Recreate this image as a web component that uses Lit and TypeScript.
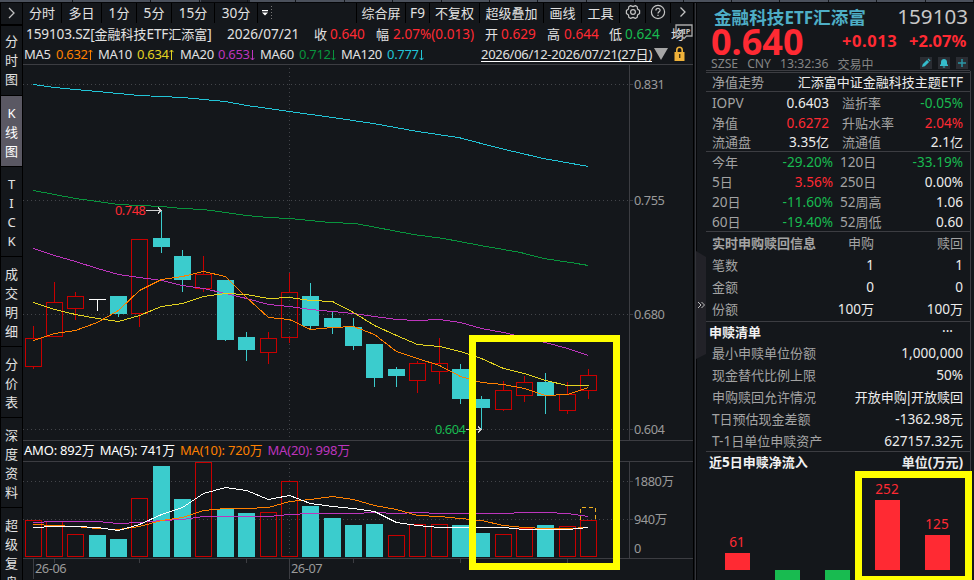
import { LitElement, html, svg, css } from 'lit';
import { customElement } from 'lit/decorators.js';

const RED = '#ff2a33';
const GREEN = '#18bb50';
const CYAN = '#3bcccd';

// Chinese glyphs are set a little smaller than the latin text beside them
const mix = (text: string) =>
  text.split(/([\u4e00-\u9fff]+|\|)/).filter(Boolean).map((part) => {
    if (part === '|') return html`<span class="bar">|</span>`;
    return /[\u4e00-\u9fff]/.test(part) ? html`<span class="cjk">${part}</span>` : part;
  });

const px = (i: number) => Math.floor(33 + i * 21.37);

// type, high, body top, body bottom, low, volume top
type Candle = [string, number, number, number, number, number];
const candles: Candle[] = [
  ['u', 326, 338, 367, 369, 520],
  ['u', 282, 302, 337, 337, 521],
  ['u', 292, 296, 309, 320, 534],
  ['t', 299, 299, 300, 311, 535],
  ['d', 296, 296, 314, 317, 539],
  ['u', 239, 239, 314, 327, 498],
  ['d', 210, 238, 247, 253, 466],
  ['d', 250, 256, 280, 292, 499],
  ['u', 256, 274, 289, 292, 462],
  ['d', 280, 280, 340, 341, 509],
  ['d', 332, 337, 350, 361, 513],
  ['u', 332, 338, 353, 364, 512],
  ['u', 273, 292, 338, 343, 481],
  ['d', 283, 296, 326, 329, 506],
  ['d', 312, 318, 327, 334, 518],
  ['d', 318, 327, 346, 350, 525],
  ['d', 344, 344, 378, 387, 524],
  ['d', 367, 369, 376, 387, 535],
  ['u', 361, 363, 381, 393, 524],
  ['u', 338, 363, 372, 384, 524],
  ['d', 364, 369, 399, 404, 525],
  ['d', 396, 399, 408, 430, 533],
  ['u', 381, 390, 410, 411, 534],
  ['u', 376, 382, 396, 402, 528],
  ['d', 373, 382, 396, 414, 525],
  ['u', 382, 394, 411, 414, 526],
  ['u', 369, 375, 391, 399, 520],
];
// bars 17 and 18 swap styles only in the volume pane
const isUp = (c: Candle, i: number) => (i === 17 ? true : i === 18 ? true : c[0] === 'u');

const ma5 = [340, 333, 330, 322, 310, 290, 279, 276, 271, 276, 297, 317, 319, 329, 327, 326, 334, 351, 358, 365, 376, 382, 384, 388, 395, 394, 387];
const ma10 = [302, 309, 314, 318, 321, 315, 306, 303, 296, 293, 294, 298, 297, 300, 301, 312, 325, 335, 344, 346, 351, 358, 368, 373, 380, 385, 385];
const ma20 = [248, 255, 261, 268, 274, 277, 280, 285, 288, 293, 298, 304, 306, 309, 311, 313, 316, 319, 320, 319, 322, 328, 332, 337, 342, 348, 355];
const ma60 = [[33, 190], [54, 194], [75, 198], [97, 201], [118, 204], [139, 205], [161, 206], [182, 208], [203, 209], [225, 212], [246, 215], [268, 217], [289, 218], [330, 222], [355, 223], [413, 234], [443, 238], [480, 245], [520, 252], [543, 258], [570, 262], [588, 265]];
const ma120 = [[33, 84], [54, 87], [75, 89], [97, 91], [118, 93], [139, 95], [182, 97], [225, 101], [246, 105], [268, 108], [289, 111], [332, 117], [373, 123], [417, 131], [458, 137], [500, 148], [543, 158], [588, 166]];

const vol5 = [527, 526, 526, 527, 530, 524, 514, 507, 493, 487, 490, 499, 495, 503, 506, 508, 511, 522, 525, 527, 527, 527, 527, 529, 529, 529, 527];
const vol10 = [524, 525, 526, 528, 529, 526, 520, 517, 510, 508, 508, 507, 501, 499, 496, 499, 505, 509, 515, 516, 518, 520, 525, 527, 528, 528, 527];
const vol20 = [522, 521, 521, 521, 523, 522, 520, 519, 516, 516, 516, 516, 514, 513, 513, 513, 512, 513, 512, 513, 513, 513, 513, 512, 512, 513, 516];

const path = (pts: number[][], color: string) =>
  svg`<polyline class="line" stroke=${color} points=${pts.map(([x, y]) => `${x + 0.5},${y + 0.5}`).join(' ')}></polyline>`;
const series = (ys: number[], color: string) => path(ys.map((y, i) => [px(i), y]), color);

const candle = ([kind, high, top, bottom, low]: Candle, i: number) => {
  const x = px(i);
  if (kind === 't') {
    return svg`<path class="line" stroke="#fff" d="M${x - 8} ${top}.5h17M${x + 0.5} ${top}V${low}"></path>`;
  }
  if (kind === 'u') {
    return svg`<path class="line" stroke="#c80000" d="M${x + 0.5} ${high}V${top}M${x + 0.5} ${bottom}V${low}"></path>
      <rect class="line" stroke="#c80000" x=${x - 7.5} y=${top + 0.5} width="16" height=${bottom - top - 1}></rect>`;
  }
  return svg`<rect fill=${CYAN} x=${x} y=${high} width="1" height=${low - high}></rect>
    <rect fill=${CYAN} x=${x - 8} y=${top} width="17" height=${bottom - top}></rect>`;
};

const volume = (c: Candle, i: number) =>
  isUp(c, i)
    ? svg`<rect class="line" stroke="#c80000" x=${px(i) - 7.5} y=${c[5] + 0.5} width="16" height=${556 - c[5]}></rect>`
    : svg`<rect fill=${CYAN} x=${px(i) - 8} y=${c[5]} width="17" height=${557 - c[5]}></rect>`;

const up = svg`<path d="M2.5 1v10M0.5 3.2L2.5 1L4.5 3.2"></path>`;
const down = svg`<path d="M2.5 1v10M0.5 8.8L2.5 11L4.5 8.8"></path>`;

@customElement('app-root')
export class AppRoot extends LitElement {
  static styles = css`
    :host {
      display: block;
      width: 974px;
      height: 580px;
      overflow: hidden;
      position: relative;
      background: #14171b;
      color: #e2e2e2;
      font-family: 'Noto Sans', 'Noto Sans CJK SC', sans-serif;
      font-size: 13.6px;
      line-height: 20px;
    }
    * {
      box-sizing: border-box;
    }
    .cjk {
      font-family: 'Noto Sans CJK SC', sans-serif;
      font-size: 13px;
      letter-spacing: 0;
    }
    .bar {
      margin: 0 -1.6px;
    }
    .strip {
      height: 3px;
      border-bottom: 1px solid #050608;
      background: linear-gradient(90deg, #4b515c 0 201px, #23262d 201px 250px, #4b515c 250px);
      display: flex;
    }
    .strip i {
      width: 49px;
      border-right: 1px solid #14171b;
    }
    .strip i:first-child {
      width: 74px;
    }
    .strip i:nth-child(2) {
      width: 79px;
    }
    .page {
      display: flex;
      height: 577px;
    }
    .rail {
      width: 23px;
      border-left: 1px solid #000;
      border-right: 1px solid #000;
      overflow: hidden;
      flex: none;
    }
    .rail div {
      border-bottom: 1px solid #000;
      padding-top: 8px;
      text-align: center;
      font-size: 13px;
      line-height: 19px;
    }
    .rail span {
      display: block;
    }
    .rail .open {
      height: 23px;
      padding: 3px 0 0;
      border-bottom: 2px solid #000;
      line-height: 0;
    }
    .rail .h3 {
      height: 71px;
    }
    .rail .first {
      height: 70px;
      padding-top: 6px;
    }
    .rail .h4 {
      height: 90px;
    }
    .rail .active {
      background: #5a5863;
      color: #fff;
    }
    .main {
      width: 670px;
      flex: none;
    }
    .toolbar {
      display: flex;
      height: 20px;
    }
    .toolbar div {
      border-right: 1px solid #000;
      text-align: center;
      white-space: nowrap;
      flex: none;
      line-height: 20px;
    }
    .toolbar .gap {
      display: flex;
      align-items: center;
      padding-left: 4px;
    }
    .toolbar svg {
      display: block;
      margin: 1px auto 0;
    }
    .toolbar .gap svg {
      margin: 0;
    }
    .quote,
    .averages {
      display: grid;
      white-space: nowrap;
      position: relative;
    }
    .quote {
      grid-template-columns: 201px 87px 16px 46px 17px 92px 16px 46px 17px 45px 16px 46px 20px;
      padding: 0 0 0 3px;
      height: 22px;
    }
    .quote > * {
      line-height: 21px;
    }
    .quote .name {
      letter-spacing: -0.15px;
    }
    .averages {
      grid-template-columns: 32px 42px 39px 43px 38px 42px 39px 42px 46px 94px 173px 20px 14px;
      padding-left: 1px;
      height: 19px;
      font-size: 13px;
      letter-spacing: -0.3px;
      line-height: 19px;
    }
    .averages > :nth-child(n + 11) {
      align-self: start;
    }
    .averages .range {
      justify-self: start;
      line-height: 17px;
      height: 17px;
      border-bottom: 1px solid #fff;
      letter-spacing: -0.28px;
    }
    .arrow {
      fill: none;
      stroke: currentColor;
      vertical-align: -2px;
    }
    .vip {
      position: absolute;
      left: 652px;
      top: 1px;
    }
    .legend {
      display: flex;
      gap: 5px;
      padding-left: 1px;
      height: 20px;
      line-height: 18px;
      font-size: 13px;
      letter-spacing: -0.2px;
      color: #fff;
      white-space: nowrap;
    }
    .legend .cjk {
      font-size: 12.8px;
    }
    svg {
      display: block;
    }
    svg.arrow {
      display: inline-block;
    }
    .line {
      fill: none;
      stroke-width: 1;
      shape-rendering: crispEdges;
    }
    .frame {
      stroke: #3c3d42;
    }
    .dots {
      stroke: #43454a;
      stroke-dasharray: 1 3;
    }
    .axis {
      fill: #9a9a9a;
      font-size: 12.8px;
      letter-spacing: -0.45px;
    }
    .split {
      width: 13px;
      flex: none;
      border-left: 1px solid #000;
    }
    .side {
      width: 264px;
      flex: none;
      color: #a3a3a3;
    }
    .scroll {
      width: 2px;
      margin-top: 68px;
      border-left: 1px solid #3c3d42;
    }
    .title,
    .price,
    .status,
    .row {
      display: flex;
      white-space: nowrap;
    }
    .title {
      justify-content: space-between;
      height: 25px;
      padding: 0 2px 0 8px;
      line-height: 27px;
      color: #4eaec6;
      font-weight: bold;
      font-size: 17px;
    }
    .title .cjk {
      font-size: 17.6px;
    }
    .title .code {
      color: #c8c8c8;
      font-weight: normal;
      font-size: 20.6px;
      line-height: 26px;
    }
    .price {
      height: 29px;
      padding-left: 5px;
      color: #ff2a33;
      font-weight: bold;
      font-size: 16.5px;
      line-height: 26px;
    }
    .price .last {
      font-size: 36px;
      line-height: 28px;
      width: 131px;
    }
    .price .diff {
      width: 67px;
      letter-spacing: 0.55px;
    }
    .status {
      height: 13px;
      padding-left: 5px;
      font-size: 12.2px;
      line-height: 14px;
      color: #858585;
    }
    .status > span {
      margin-right: 9px;
    }
    .status .cjk {
      font-size: 12px;
    }
    .status svg {
      margin-right: 6px;
    }
    .status .push {
      flex: 1;
    }
    .block {
      border-top: 1px solid #3c3d42;
      padding: 0 7px 0 6px;
    }
    .row > * {
      width: 117px;
    }
    .block.top {
      height: 21px;
      border-top: 3px double #3c3d42;
      line-height: 17px;
    }
    .top .row > :first-child {
      width: 60px;
    }
    .top .row > :last-child {
      flex: 1;
    }
    .four .row > :nth-child(3) {
      padding-left: 13px;
      width: 80px;
    }
    .four .row > :last-child {
      flex: 1;
    }
    .nav {
      padding-top: 1px;
      line-height: 19.5px;
    }
    .years .row > :nth-child(3) {
      padding-left: 7px;
      width: 70px;
    }
    .three .row,
    .list .row {
      height: 22px;
      line-height: 21px;
    }
    .list .row {
      line-height: 19px;
    }
    .list .row:first-child {
      height: 21px;
    }
    .three .row > :nth-child(2) {
      width: 45px;
    }
    .three .row > :last-child {
      flex: 1;
    }
    .list .row > :last-child {
      flex: 1;
    }
    .list .row > :first-child {
      width: 130px;
    }
    .v {
      text-align: right;
      color: #ececec;
    }
    .g {
      color: #18bb50;
    }
    .r {
      color: #ff2a33;
    }
    .dim {
      color: #a3a3a3;
    }
    .head {
      font-weight: bold;
    }
    .lit {
      color: #f2f2f2;
      margin-left: -3px;
    }
    .mark {
      position: absolute;
      border: 7px solid #ffff00;
    }
    .mark.candles {
      left: 469px;
      top: 335px;
      width: 151px;
      height: 235px;
    }
    .mark.flow {
      left: 855px;
      top: 471px;
      width: 117px;
      height: 112px;
    }
  `;

  rail() {
    const items: [string, string][] = [
      ['分时图', 'first'], ['K线图', 'h3 active'], ['TICK', 'h4'], ['成交明细', 'h4'],
      ['分价表', 'h3'], ['深度资料', 'h4'], ['超级复盘', 'h4'],
    ];
    return html`
      <div class="rail">
        <div class="open">
          <svg width="20" height="14" fill="none" stroke="#c0c0c0" stroke-width="1.3"><path d="M8 2L13 7L8 12"></path></svg>
        </div>
        ${items.map(([text, cls]) => html`<div class=${cls}>${[...text].map((c) => html`<span>${c}</span>`)}</div>`)}
      </div>
    `;
  }

  toolbar() {
    const left: [string, number][] = [['分时', 39], ['多日', 40], ['1分', 35], ['5分', 35], ['15分', 43], ['30分', 43]];
    const right: [string, number][] = [['综合屏', 49], ['F9', 24], ['不复权', 50], ['超级叠加', 64], ['画线', 38], ['工具', 38]];
    return html`
      <div class="toolbar">
        ${left.map(([t, w]) => html`<div style="width:${w}px">${mix(t)}</div>`)}
        <div class="gap" style="width:99px">
          <svg width="12" height="14"><path fill="#fff" d="M0 4h6v1.3H0zM0 6.5h6L3 9.5z"></path><path stroke="#777" stroke-dasharray="1 2" d="M9.5 0v14"></path></svg>
        </div>
        ${right.map(([t, w]) => html`<div style="width:${w}px">${mix(t)}</div>`)}
        <div style="width:26px">
          <svg width="16" height="16" fill="none" stroke="#c4c4c4" stroke-width="1.2">
            <path stroke-linejoin="round" d="M5.6 1.6L8 2.6L10.4 1.6L12.2 2.7L12.5 5L14.6 6.6V9.4L12.5 11L12.2 13.3L10.4 14.4L8 13.4L5.6 14.4L3.8 13.3L3.5 11L1.4 9.4V6.6L3.5 5L3.8 2.7z"></path>
            <circle cx="8" cy="8" r="2.4"></circle>
          </svg>
        </div>
        <div style="width:25px">
          <svg width="16" height="16" fill="none" stroke="#c4c4c4" stroke-width="1.2">
            <circle cx="8" cy="8" r="6.6"></circle>
            <path d="M5.9 6.4C5.9 3.7 10.1 3.7 10.1 6.3C10.1 7.8 8 7.9 8 9.5M8 10.7v1.3"></path>
          </svg>
        </div>
        <div style="width:24px;border:0">
          <svg width="16" height="16" fill="none" stroke="#c4c4c4" stroke-width="1.3"><path d="M5.5 3.5L10 8L5.500 12.5"></path></svg>
        </div>
      </div>
    `;
  }

  header() {
    const ma: [string, string, string, unknown][] = [
      ['MA5', '0.632', '#ff8000', up], ['MA10', '0.634', '#e3d321', up], ['MA20', '0.653', '#bd35bd', down],
      ['MA60', '0.712', '#08943d', down], ['MA120', '0.777', '#22c4d6', down],
    ];
    return html`
      <div class="quote">
        <span class="name">${mix('159103.SZ[金融科技ETF汇添富]')}</span><span>2026/07/21</span>
        <span>${mix('收')}</span><span class="r">0.640</span>
        <span>${mix('幅')}</span><span class="r">2.07%(0.013)</span>
        <span>${mix('开')}</span><span class="r">0.629</span>
        <span>${mix('高')}</span><span class="r">0.644</span>
        <span>${mix('低')}</span><span class="g">0.624</span>
        <span>${mix('均')}</span>
        <svg class="vip" width="18" height="16">
          <path fill="none" stroke="#a9a9a9" stroke-width="1.3" d="M1 1h16v11h-5.5l-2.5 2.5l-2.5-2.5H1z"></path>
          <text x="3" y="9.5" font-size="7.5" font-weight="bold" fill="#c4c4c4">VIP</text>
        </svg>
      </div>
      <div class="averages">
        ${ma.map(([name, value, color, arrow]) => html`
          <span>${name}</span><span style="color:${color}">${value}<svg class="arrow" width="5" height="12">${arrow}</svg></span>`)}
        <span class="range">${mix('2026/06/12-2026/07/21(27日)')}</span>
        <svg width="15" height="16"><path fill="#a6a6a6" d="M0 3h14L7 15z"></path></svg>
        <svg width="12" height="16">
          <path fill="none" stroke="#efb23a" stroke-width="1.6" d="M2.8 8V5C2.8 1.4 8.2 1.4 8.2 5V8"></path>
          <path fill="#efb23a" d="M0.5 7h10v9h-10z"></path>
          <path fill="#4a3410" d="M5 9h1.4v4H5z"></path>
        </svg>
      </div>
    `;
  }

  priceChart() {
    const grid: [number, string][] = [[84, '0.831'], [200, '0.755'], [314, '0.680'], [429, '0.604']];
    return html`
      <svg width="670" height="377" viewBox="23 64 670 377">
        <path class="line frame" d="M23 64.5H693M23 440.5H693M629.5 65V440"></path>
        <path class="line dots" d="M289.5 68V440"></path>
        ${grid.map(([y, label]) => svg`
          <path class="line dots" d="M23 ${y}.5H629"></path>
          <path class="line frame" d="M629 ${y}.5h4"></path>
          <text class="axis" x="634" y=${y + 5}>${label}</text>`)}
        ${candles.map(candle)}
        ${path(ma120, '#22c4d6')}
        ${path(ma60, '#08943d')}
        ${series(ma20, '#bd35bd')}
        ${series(ma10, '#e3d321')}
        ${series(ma5, '#ff8000')}
        <text class="axis" x="115" y="215" style="fill:${RED}">0.748</text>
        <path class="line" stroke="#d0d0d0" d="M146 210.5h15M158 207.5l3 3l-3 3"></path>
        <text class="axis" x="435" y="434" style="fill:${GREEN}">0.604</text>
        <path class="line" stroke="#d0d0d0" d="M466 429.5h15M478 426.5l3 3l-3 3"></path>
      </svg>
    `;
  }

  volumeChart() {
    return html`
      <div class="legend">
        <span>${mix('AMO: 892万')}</span>
        <span>${mix('MA(5): 741万')}</span>
        <span style="color:#ff8000">${mix('MA(10): 720万')}</span>
        <span style="color:#bd35bd">${mix('MA(20): 998万')}</span>
      </div>
      <svg width="670" height="119" viewBox="23 461 670 119">
        <path class="line frame" d="M23 461.5H693M23 558.5H693M629.5 462V558M629 481.5h4M629 519.5h4M33.5 559v20M289.5 559v20"></path>
        <path class="line frame" d=${[54, 139, 246, 353, 460, 567].map((x) => `M${x}.5 559v4`).join('')}></path>
        <path class="line dots" d="M23 481.5H629M23 519.5H629M289.5 464V558"></path>
        ${candles.map(volume)}
        <path class="line" stroke="#f0b020" stroke-dasharray="4 3" d="M580.5 520V507.5H595.5V520"></path>
        ${series(vol20, '#bd35bd')}
        ${series(vol10, '#ff8000')}
        ${series(vol5, '#fff')}
        <text class="axis" x="634" y="486">1880<tspan font-size="12.500">万</tspan></text>
        <text class="axis" x="634" y="524">940<tspan font-size="12.500">万</tspan></text>
        <text class="axis" x="634" y="553">0</text>
        <text class="axis" x="35" y="573">26-06</text>
        <text class="axis" x="291" y="573">26-07</text>
      </svg>
    `;
  }

  // label, value, label, value; `split` is the right edge of the first value
  four(rows: string[][], split: number) {
    const tone = (s: string) => (s[0] === '-' ? 'v g' : /^(0\.6272|2\.04%|3\.56%)$/.test(s) ? 'v r' : 'v');
    return rows.map(([a, b, c, d]) => html`
      <div class="row">
        <span style="width:50px">${mix(a)}</span>
        <span class=${tone(b)} style="width:${split - 50}px">${mix(b)}</span>
        <span>${mix(c)}</span><span class=${tone(d)}>${mix(d)}</span>
      </div>`);
  }

  side() {
    const flows = [[725, 553, 570, '61'], [775, 570, 590, ''], [825, 570, 590, ''], [875, 500, 570, '252'], [925, 535, 570, '125']] as const;
    const list = [
      ['最小申赎单位份额', '1,000,000'], ['现金替代比例上限', '50%'], ['申购赎回允许情况', '开放申购|开放赎回'],
      ['T日预估现金差额', '-1362.98元'], ['T-1日单位申赎资产', '627157.32元'],
    ];
    return html`
      <div class="side">
        <div class="title"><span>${mix('金融科技ETF汇添富')}</span><span class="code">159103</span></div>
        <div class="price"><span class="last">0.640</span><span class="diff">+0.013</span><span>+2.07%</span></div>
        <div class="status">
          <span>SZSE</span><span>CNY</span><span>13:32:36</span><span>${mix('交易中')}</span><span class="push"></span>
          <svg width="12" height="12"><path fill="#2a2d33" d="M0 0h12v12H0z"></path><path fill="#35bccb" d="M2 10l.7-2.8L7 2.9L9.1 5L4.8 9.3zM7.6 2.3l.8-.8l2.1 2.1l-.8.8z"></path></svg>
          <svg width="12" height="12"><path fill="#2a2d33" d="M0 0h12v12H0z"></path><path fill="#35bccb" d="M2 9V8l1-1V5C3 1 9 1 9 5v2l1 1v1zM4.8 9.6h2.4v.9H4.8z"></path></svg>
          <svg width="12" height="12" style="margin-right:2px"><path fill="#2a2d33" d="M0 0h12v12H0z"></path><path stroke="#2b96a6" stroke-width="1.5" d="M6 2v8M2 6h8"></path></svg>
        </div>
        <div class="block top">
          <div class="row"><span>${mix('净值走势')}</span><span class="v">${mix('汇添富中证金融科技主题ETF')}</span></div>
        </div>
        <div class="block four nav" style="height:60px">
          ${this.four([['IOPV', '0.6403', '溢折率', '-0.05%'], ['净值', '0.6272', '升贴水率', '2.04%'], ['流通盘', '3.35亿', '流通值', '2.1亿']], 117)}
        </div>
        <div class="block four years" style="height:80px">
          ${this.four([['今年', '-29.20%', '120日', '-33.19%'], ['5日', '3.56%', '250日', '0.00%'], ['20日', '-11.60%', '52周高', '1.06'], ['60日', '-19.40%', '52周低', '0.60']], 121)}
        </div>
        <div class="block three" style="height:90px">
          <div class="row"><span class="head">${mix('实时申购赎回信息')}</span><span class="v dim">${mix('申购')}</span><span class="v dim">${mix('赎回')}</span></div>
          ${[['笔数', '1', '1'], ['金额', '0', '0'], ['份额', '100万', '100万']].map(([a, b, c]) => html`
            <div class="row"><span>${mix(a)}</span><span class="v">${mix(b)}</span><span class="v">${mix(c)}</span></div>`)}
        </div>
        <div class="block list" style="height:130px">
          <div class="row"><span class="head lit">${mix('申赎清单')}</span><span class="v" style="padding-right:10px;line-height:18px">···</span></div>
          ${list.map(([a, b]) => html`<div class="row"><span>${mix(a)}</span><span class="v">${mix(b)}</span></div>`)}
        </div>
        <div class="block list" style="height:21px">
          <div class="row"><span class="head lit">${mix('近5日申赎净流入')}</span><span class="v head">${mix('单位(万元)')}</span></div>
        </div>
        <svg width="264" height="108" viewBox="706 472 264 108">
          ${flows.map(([x, top, bottom, label]) => svg`
            <rect x=${x} y=${top} width="25" height=${bottom - top} fill=${label ? RED : GREEN}></rect>
            <text x=${x + 12} y=${top - 6} text-anchor="middle" font-size="13.6" fill=${RED}>${label}</text>`)}
        </svg>
      </div>
    `;
  }

  render() {
    return html`
      <div class="strip">${Array.from({ length: 19 }, () => html`<i></i>`)}</div>
      <div class="page">
        ${this.rail()}
        <div class="main">
          ${this.toolbar()}
          ${this.header()}
          ${this.priceChart()}
          ${this.volumeChart()}
        </div>
        <div class="split">
          <svg width="12" height="577" viewBox="694 3 12 577">
            <path fill="#34353a" d="M695 3h1v577h-1z"></path>
            <path fill="#050608" d="M696 3h1v577h-1z"></path>
            <path fill="#222228" d="M696 251l10 6v97l-10 5z"></path>
            <path fill="none" stroke="#c0c0c0" d="M698 302l3 3l-3 3M701.5 302l3 3l-3 3"></path>
          </svg>
        </div>
        ${this.side()}
        <div class="scroll"></div>
      </div>
      <div class="mark candles"></div>
      <div class="mark flow"></div>
    `;
  }
}
